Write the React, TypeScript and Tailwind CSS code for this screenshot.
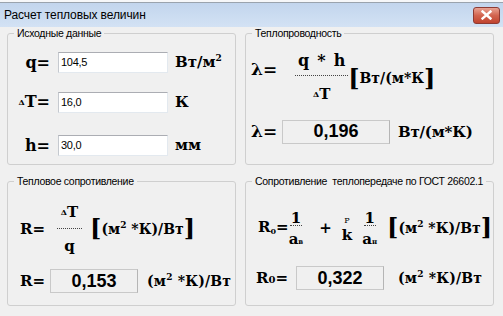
import React from 'react';

const mono = "font-['DejaVu_Serif','Liberation_Mono',monospace] font-bold text-black";
const sans = "font-['Liberation_Sans',Arial,sans-serif] text-black";

function GroupBox({ title, className, children }: { title: string; className: string; children: React.ReactNode }) {
  return (
    <fieldset className={`border border-[#cfcfcf] rounded-[3px] min-w-0 ${className}`}>
      <legend className={`${sans} ml-[6px] px-[3px] text-[10.5px] leading-[13px] tracking-[-0.3px] whitespace-pre`}>{title}</legend>
      {children}
    </fieldset>
  );
}

function Field({ value }: { value: string }) {
  return (
    <div className={`${sans} w-[110px] h-[21px] bg-white border border-[#e3e9ef] border-t-[#abadb3] border-l-[#c5c9cf] pl-[2px] text-[11px] leading-[19px] tracking-[-0.3px]`}>
      {value}
    </div>
  );
}

function Result({ value, width }: { value: string; width: string }) {
  return (
    <div className={`${sans} ${width} h-[24px] bg-[#f0f0f0] border border-[#c9c9c9] border-r-[#b5b5b5] flex items-center justify-center text-[18px] font-bold`}>
      {value}
    </div>
  );
}

// fraction: numerator, dotted rule, denominator
function Frac({ top, bottom, rule }: { top: React.ReactNode; bottom: React.ReactNode; rule: string }) {
  return (
    <div className="flex flex-col items-center">
      <div className="leading-[20px]">{top}</div>
      <div className={`${rule} border-t border-dotted border-[#444]`} />
      <div className="leading-[20px]">{bottom}</div>
    </div>
  );
}

function DeltaT({ size }: { size: string }) {
  return (
    <span className={`${size} inline-flex items-baseline`}>
      <span className="text-[8px] -translate-y-[2px]">Δ</span>T
    </span>
  );
}

function M2K() {
  return (
    <>
      (м<sup className="text-[9px] -top-[6px]">2</sup> *К)/Вт
    </>
  );
}

export default function App() {
  return (
    <div className="w-[503px] h-[316px] bg-[#f0f0f0] flex flex-col overflow-hidden">
      <div className="h-[3px] bg-[#f6f7f9] border-b border-[#9aa3ad]" />
      <div className="h-[24px] bg-gradient-to-b from-[#c2d5ed] to-[#d3e2f4] flex items-center justify-between pl-[4px] pr-[3px]">
        <span className={`${sans} text-[12px] tracking-[-0.1px]`}>Расчет тепловых величин</span>
        <div className="w-[27px] h-[17px] rounded-[3px] border border-[#8d3b34] bg-gradient-to-b from-[#e8a293] via-[#d2644f] to-[#c0432f] flex items-center justify-center">
          <svg width="11" height="10" viewBox="0 0 11 10">
            <path d="M1.5 1.5 L9.5 8.5 M9.5 1.5 L1.5 8.5" stroke="#fff" strokeWidth="2.4" strokeLinecap="square" />
          </svg>
        </div>
      </div>

      <div className="grid grid-cols-[229px_249px] grid-rows-[138px_131px] gap-x-[9px] gap-y-[10px] pl-[7px]">
        {/* Исходные данные */}
        <GroupBox title="Исходные данные" className="">
          <div className="flex flex-col pt-[12px]">
            {[
              { label: <span>q=</span>, value: '104,5', unit: <>Вт/м<sup className="text-[9px] -top-[6px]">2</sup></>, mt: '' },
              { label: <span className="inline-flex items-baseline"><DeltaT size="" />=</span>, value: '16,0', unit: <>К</>, mt: 'mt-[19px]' },
              { label: <span>h=</span>, value: '30,0', unit: <>мм</>, mt: 'mt-[22px]' },
            ].map((row, idx) => (
              <div key={idx} className={`flex items-center h-[21px] ${row.mt}`}>
                <div className={`${mono} w-[42px] text-right text-[16px] leading-[21px]`}>{row.label}</div>
                <div className="ml-[8px]"><Field value={row.value} /></div>
                <div className={`${mono} ml-[7px] text-[15px] leading-[21px]`}>{row.unit}</div>
              </div>
            ))}
          </div>
        </GroupBox>

        {/* Теплопроводность */}
        <GroupBox title="Теплопроводность" className="">
          <div className="flex items-center pl-[5px] pt-[11px]">
            <div className={`${mono} text-[17px] mb-[18px]`}>λ=</div>
            <div className={`${mono} text-[16px] ml-[18px]`}>
              <Frac
                rule="w-[53px] mt-[4px] mb-[8px]"
                top={<span className="flex gap-[8px]"><span>q</span><span>*</span><span>h</span></span>}
                bottom={<DeltaT size="text-[15px]" />}
              />
            </div>
            <div className={`${mono} flex items-center`}>
              <span className="text-[24px] leading-[26px]">[</span>
              <span className="text-[14px]">Вт/(м*К</span>
              <span className="text-[24px] leading-[26px]">]</span>
            </div>
          </div>
          <div className="flex items-center pl-[5px] mt-[13px]">
            <div className={`${mono} text-[17px] w-[31px]`}>λ=</div>
            <Result value="0,196" width="w-[108px]" />
            <div className={`${mono} ml-[8px] text-[15px] tracking-[-0.2px]`}>Вт/(м*К)</div>
          </div>
        </GroupBox>

        {/* Тепловое сопротивление */}
        <GroupBox title="Тепловое сопротивление" className="overflow-visible">
          <div className="flex items-center pl-[12px] pt-[14px]">
            <div className={`${mono} text-[15px]`}>R=</div>
            <div className={`${mono} text-[15px] ml-[12px]`}>
              <Frac rule="w-[25px] mt-[4px] mb-[7px]" top={<DeltaT size="" />} bottom={<span>q</span>} />
            </div>
            <div className={`${mono} ml-[8px] flex items-center`}>
              <span className="text-[24px] leading-[26px]">[</span>
              <span className="text-[14px] whitespace-nowrap"><M2K /></span>
              <span className="text-[24px] leading-[26px]">]</span>
            </div>
          </div>
          <div className="flex items-center pl-[12px] mt-[13px]">
            <div className={`${mono} text-[15px] w-[30px]`}>R=</div>
            <Result value="0,153" width="w-[88px]" />
            <div className={`${mono} ml-[9px] text-[14px] tracking-[0.2px] whitespace-nowrap`}><M2K /></div>
          </div>
        </GroupBox>

        {/* Сопротивление теплопередаче */}
        <GroupBox title="Сопротивление  теплопередаче по ГОСТ 26602.1" className="">
          <div className="flex items-center pl-[12px] pt-[20px]">
            <div className={`${mono} text-[15px] flex items-baseline mb-[6px]`}>
              R<span className="text-[8px] translate-y-[2px]">0</span>=
            </div>
            <div className={`${mono} text-[15px]`}>
              <Frac rule="w-[12px] -mt-[3px] mb-[3px]" top={<span>1</span>} bottom={<span>a<span className="text-[7px]">в</span></span>} />
            </div>
            <div className={`${mono} text-[15px] ml-[16px] mb-[4px]`}>+</div>
            <div className={`${mono} ml-[10px] flex flex-col items-center gap-[3px] leading-none`}>
              <span className="text-[8px] font-normal">Р</span>
              <span className="text-[15px]">k</span>
            </div>
            <div className={`${mono} text-[15px] ml-[10px]`}>
              <Frac rule="w-[12px] -mt-[3px] mb-[3px]" top={<span>1</span>} bottom={<span>a<span className="text-[7px]">н</span></span>} />
            </div>
            <div className={`${mono} ml-[10px] flex items-center mb-[4px]`}>
              <span className="text-[24px] leading-[26px]">[</span>
              <span className="text-[14px] whitespace-nowrap"><M2K /></span>
              <span className="text-[24px] leading-[26px]">]</span>
            </div>
          </div>
          <div className="flex items-center pl-[10px] mt-[14px]">
            <div className={`${mono} text-[15px] w-[40px] flex items-baseline`}>
              R<span className="text-[10px]">0</span>=
            </div>
            <Result value="0,322" width="w-[88px]" />
            <div className={`${mono} ml-[14px] text-[14px] tracking-[0.2px] whitespace-nowrap`}><M2K /></div>
          </div>
        </GroupBox>
      </div>
    </div>
  );
}
